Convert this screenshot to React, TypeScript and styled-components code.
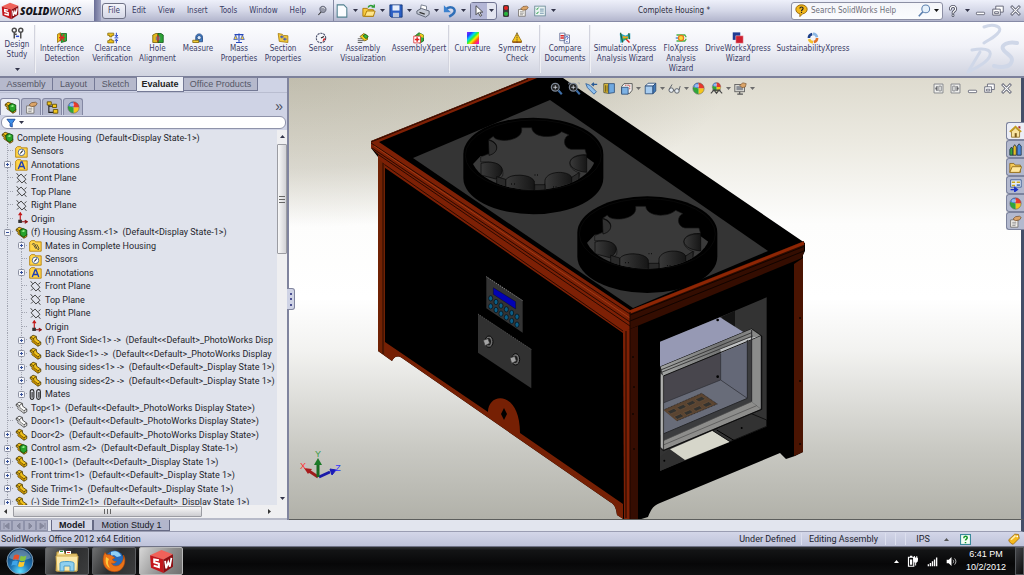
import React from "react";
import styled, { createGlobalStyle, css } from "styled-components";

const uiFont = '"DejaVu Sans Condensed", "DejaVu Sans", sans-serif';
const treeFont = 'Roboto, "Open Sans", sans-serif';
const tabFont = '"Liberation Sans", Arial, sans-serif';

const GlobalStyle = createGlobalStyle`
  * { box-sizing: border-box; }
  body { margin: 0; background: #0b0b0c; font-family: ${uiFont}; font-size: 8px; color: #3a3c66; }
  button { margin: 0; padding: 0; border: 0; background: none; color: inherit; font: inherit; cursor: default; }
  svg { display: block; flex: none; }
  ul { list-style: none; margin: 0; padding: 0; }
`;

/* ---------- icons ---------- */

const Part = ({ main = "#f2c21b", edge = "#4a3600", dark = "#b98500" }) => (
  <g stroke={edge} strokeWidth="1" strokeLinejoin="round">
    <path d="M1.5 4 5 1.5 9 3 9.5 6.500 14.500 10 14.500 13 11 15 3.500 9.500 4 7 1.500 6z" fill={main} />
    <path d="M1.500 4 5.500 5.500 9 3M5.500 5.500 6 8.500 11 12 14.500 10M11 12V15" fill="none" />
    <path d="M5.500 6 6 8.500 11 12V14.500L4 9.500z" fill={dark} stroke="none" />
  </g>
);

const Assy = () => (
  <g>
    <Part />
    <path d="M6 5.500 10 3 14.500 5V11L10.500 13.500 6.500 11z" fill="#27a32a" stroke="#0c4a0e" />
    <path d="M8 6.500 10.500 5 12.500 6 10.500 7.500z" fill="#9df08f" />
  </g>
);

const Folder = () => (
  <path d="M.8 4 3 2h4l1 1.500h7v11.500H.8z" fill="#ffd54a" stroke="#b07a00" />
);

const Ball = () => (
  <g>
    <path d="M8 8V1A7 7 0 0 0 1.500 6z" fill="#3f7fe0" />
    <path d="M8 8V1A7 7 0 0 1 15 8z" fill="#e8382c" />
    <path d="M8 8H15A7 7 0 0 1 8 15z" fill="#f5c61c" />
    <path d="M8 8 1.500 6A7 7 0 0 0 8 15z" fill="#2fa63a" />
    <ellipse cx="6" cy="4.500" rx="3" ry="2" fill="#fff" opacity=".45" />
    <circle cx="8" cy="8" r="7" fill="none" stroke="#555" strokeWidth=".6" />
  </g>
);

const Hand = () => (
  <g>
    <path d="M2 6h9v9H2z" fill="#f5f3ee" stroke="#6d6a66" />
    <path d="M4 9h5M4 11h5M4 13h4" stroke="#888" />
    <path d="M5 5 8 2 13 1.500 15 3 13 6 8 7z" fill="#dba468" stroke="#6b4520" strokeWidth=".8" />
  </g>
);

const Lens = ({ ring }: { ring: string }) => (
  <g fill="none">
    <circle cx="6.500" cy="6.500" r="4.800" stroke={ring} strokeWidth="1.600" fill="#222" />
    <path d="m10.500 10.500 4 4.500" stroke="#3f6fa8" strokeWidth="2.600" />
    <path d="M4 6.500h5M6.500 4v5" stroke="#d9dde5" />
  </g>
);

const icons: Record<string, React.ReactNode> = {
  part: <Part />,
  hidden: <Part main="#fdfdfd" edge="#333" dark="#c9c9c9" />,
  assy: <Assy />,
  sensorFolder: <g><Folder /><circle cx="8" cy="9" r="4" fill="#fff" stroke="#33518c" /><path d="m6.500 10.500 3-3.500" stroke="#222" strokeWidth="1.300" /></g>,
  noteFolder: <g><Folder /><path d="M4 13.500 7.500 5h1.200L12 13.500M5.500 10.500h5" stroke="#1f3fb4" strokeWidth="1.700" fill="none" /></g>,
  mateFolder: <g><Folder /><path d="M4 7c0-2 3-2 3.500 0l2.500 5c1 2 3 1 2-1L9.500 6.500M5.500 7l3 5" stroke="#333" fill="none" /></g>,
  plane: <path d="M2.500 7 7.500 2.500 13.500 9 8.500 13.500zM2 1.500 4.500 4.500M11.500 11.500 14 14.500M2.500 13 5 10.500M11.500 5.500 14 3" stroke="#333" fill="none" strokeWidth="1.100" />,
  origin: <g fill="none" strokeWidth="1.400"><path d="M6.500 13V1.500M4.500 4l2-3 2 3" stroke="#c11515" /><path d="M6.500 12h8M12 10l3 2-3 2" stroke="#8d1010" /><path d="M4 9.500h4.500v4H4z" fill="#333" stroke="none" /></g>,
  mates: <g fill="none" stroke="#222" strokeWidth="1.300"><rect x="1.500" y="2" width="4.500" height="12" rx="2.200" /><path d="M3.800 5v7M12.200 5v7" /><rect x="9.500" y="2" width="4.500" height="12" rx="2.200" /></g>,
  props: <Hand />,
  config: <g><path d="M3.500 3v11h6M3.500 6.500h5" stroke="#222" fill="none" strokeWidth="1.300" /><path d="M1.500 1h5v4h-5zM8 4h5v4H8zM9 10.500h5.500v4.500H9z" fill="#f5c91d" stroke="#5d4700" /></g>,
  ball: <Ball />,
  filter: <path d="M1.500 2h13L10 8.500V14.500L6.500 13V8.500z" fill="#3d8fe8" stroke="#123f94" strokeWidth="1.300" />,
  study: <g fill="none" stroke="#4b4b4b" strokeWidth="1.800"><circle cx="4" cy="4" r="2.500" /><circle cx="12" cy="4" r="2.500" /><path d="M4 6.500V14M12 6.500V14M4 9h3" /><path d="M6 11.500h4" stroke="#2b4bd0" /></g>,
  interference: <g><path d="M2 3 6 1v10l-4 3z" fill="#f0c420" stroke="#8a6a00" /><path d="M7 2h7v10l-7 2z" fill="#2fb83a" stroke="#0b5d14" /><path d="m5 3 6 9M11 3 5 12M4 7.500h8" stroke="#e02424" strokeWidth="1.600" /></g>,
  clearance: <g><path d="M1 1.500h8v3H6.500v2h-3v-2H1zM1 14.500h8v-3H6.500v-2h-3v2H1z" fill="#f2c41c" stroke="#7c6000" /><path d="M12.500 1v5M12.500 15v-5M10.500 4l2 2.500 2-2.500M10.500 12l2-2.500 2 2.500M10 7.800h5" stroke="#2546c8" fill="none" strokeWidth="1.300" /></g>,
  hole: <g><path d="M1 4 5 2h3v12H1z" fill="#e4b91d" stroke="#6e5600" /><path d="M8 2h4l3 2v10H8z" fill="#2aa336" stroke="#0b4f12" /><path d="M5 6h6v5H5z" fill="#7c7c84" /><path d="M8 4v9" stroke="#c22" strokeWidth="1.500" /></g>,
  measure: <g><path d="M5 12V7c0-6 9-6 9 0v6H5z" fill="#3f7fc9" stroke="#1b3f78" /><circle cx="9.500" cy="7.500" r="2.800" fill="#d8e8fb" stroke="#1b3f78" /><path d="M1 11h8v3H1z" fill="#f3cf3a" stroke="#7c6000" /></g>,
  mass: <g fill="none"><path d="M8 2v11M2 3.500h12M4 14h8" stroke="#2447bd" strokeWidth="1.500" /><path d="M3.500 4 1 10h5zM12.500 4 10 10h5z" fill="#f2cf42" stroke="#2447bd" strokeWidth=".9" /></g>,
  section: <g><path d="M1.500 2 7 3l1.500 1.500L14.500 5v9L3 12.500z" fill="#f3c93a" stroke="#a07400" /><path d="M4 6.500h5M6.500 4.500v4M8 9.500h5M10.500 7.500v4" stroke="#2546c8" strokeWidth="1.200" /></g>,
  sensor: <g><circle cx="8" cy="8" r="6.300" fill="#f4f6fb" stroke="#444b66" strokeWidth="1.400" strokeDasharray="3 1" /><path d="M8 8 12 6" stroke="#222" strokeWidth="1.500" /><path d="M10 13a6 6 0 0 0 4-5l-3 1z" fill="#e02424" /></g>,
  visual: <g><path d="M1 9h6M1 11.500h8M1 14h6" stroke="#555" strokeWidth="1.200" /><path d="M4 6 9 2l5 3v5l-4 2z" fill="#f0c820" stroke="#6e5600" /><path d="m8 5 3-2 4 3-3 3z" fill="#39b43d" stroke="#0b5d14" /></g>,
  axpert: <g><path d="M3 5 8 1l6 3v8l-5 3z" fill="#35ad3a" stroke="#0b5d14" /><path d="M9 1.500 14 4v4L9 6z" fill="#f0c820" /><path d="M1 5.500h9v9H1z" fill="#fff" stroke="#d22" /><path d="M5.500 7v6M2.500 10h6" stroke="#e02020" strokeWidth="2" /></g>,
  compare: <g><path d="M1 1.500h7v10H1zM7 4h7v11H7z" fill="#f7f9ff" stroke="#56618c" /><path d="M2 5h4.500M2 8h4.500" stroke="#d22" strokeWidth="1.700" /><path d="M9 7.500c0-2 3.500-2 3 .2-.2 1-1.500 1-1.500 2.500M10.500 12v1.500" stroke="#2447bd" strokeWidth="1.300" fill="none" /></g>,
  symmetry: <g><path d="M8 1.500c2 3 2.500 5 6 10.500v1.500H2V12C5.500 6.500 6 4.500 8 1.500z" fill="#f6c620" stroke="#8a6300" /><path d="M8 .5v15" stroke="#3b3b3b" strokeDasharray="2 1" /><path d="M2 13.500h12" stroke="#8a3c00" strokeWidth="1.500" /></g>,
  simulation: <g><path d="M1 2c4 0 5 3 8 2.500 2-.5 3-2.500 6-3v8c-3-1-6 0-9 3l-4 2z" fill="#2aa7c0" /><path d="m2 1 3 13M13 1.500l1 8" stroke="#263" strokeWidth="1.500" /><path d="M5 5c2 1 4 1.500 7 .5v3C9 9 7 9 5 8.500z" fill="#f0a51c" /><path d="M9 9l5 5" stroke="#d22" strokeWidth="1.800" /><path d="M6 9.500c2 0 3-.5 5-1" stroke="#3b3" strokeWidth="1.500" fill="none" /></g>,
  flo: <g fill="none" strokeWidth="1.700"><path d="M2 4h11l2 3M2 12h11l2-3" stroke="#49b045" /><path d="M1 8h4" stroke="#2c7cd6" /><circle cx="8" cy="8" r="3.500" stroke="#e8761c" fill="#f8dd3a" /></g>,
  drive: <g><path d="M1 .5h10v10H1z" fill="#1f3a93" /><path d="M5 5h10v10H5z" fill="#cf2030" stroke="#f6dfe2" strokeWidth=".6" /></g>,
  sustain: <g fill="none" strokeWidth="3.400"><path d="M8 2.500A5.500 5.500 0 0 1 13.300 7" stroke="#8cb7e4" /><path d="M13.500 8A5.500 5.500 0 0 1 9 13.400" stroke="#e2732a" /><path d="M8 13.500A5.500 5.500 0 0 1 2.700 9.500" stroke="#f3c02e" /><path d="M2.500 8A5.500 5.500 0 0 1 7 2.600" stroke="#1d3f88" /></g>,
  pin: <g><path d="M6 2.500c4-2 8 1 7 5s-5 4-7 2.500S3 4 6 2.500z" fill="#9699a8" stroke="#45485a" /><path d="m6 10-4 4.500" stroke="#333" strokeWidth="1.500" /><path d="M7 4c2-1 4 0 4 1.500" stroke="#fff" fill="none" /></g>,
  doc: <path d="M2.500 1h7.500l3.500 3.500V15h-11z" fill="#fbfdff" stroke="#51808f" strokeWidth="1.200" />,
  open: <g><path d="M1 5h5l1 1.500h6V14H1z" fill="#f6c93d" stroke="#a87500" /><path d="m3 14 2.500-6H15l-2 6z" fill="#ffe68a" stroke="#a87500" /><path d="M7 4c1-3 5-3 6-.5M11 3.500h3v-3" stroke="#2b9b34" strokeWidth="1.600" fill="none" /></g>,
  save: <g><path d="M1 1h14v14H2.500L1 13.500z" fill="#2b5fc4" stroke="#153877" /><path d="M4 1.500h8v6H4z" fill="#e8effb" /><path d="M4.500 10h7v5h-7z" fill="#b9c6dd" /></g>,
  print: <g><path d="m5 6 1-5 6 1.500v4" fill="#fff" stroke="#6b7384" /><path d="m1 8 5-3 9 3v4l-4 3-10-4z" fill="#c3c8d4" stroke="#555c6d" /><path d="m4 9.500 6 2" stroke="#333" strokeWidth="1.400" /></g>,
  undo: <g fill="none"><path d="M3 6.500C8 1 15 5 13 9.500c-1 2.500-3 3.500-6 5" stroke="#2f6fb8" strokeWidth="2.800" /><path d="M1 1.500v8h8z" fill="#3c82cf" /></g>,
  cursor: <path d="M4 1v12l3-3 2.500 5 2-1-2.500-4.500h4z" fill="#fff" stroke="#333" strokeWidth="1.100" />,
  traffic: <g><rect x="4" y="0" width="8" height="16" rx="2" fill="#3b3b3b" /><circle cx="8" cy="4" r="2.800" fill="#e32222" /><circle cx="8" cy="11.800" r="2.800" fill="#27b53a" /></g>,
  list: <g><rect x="1" y="1.500" width="14" height="13" fill="#e9f2f2" stroke="#5d7f8c" /><path d="m3 5 1 1 2-2.500M3 10.500l1 1 2-2.500" stroke="#1e9a3c" fill="none" strokeWidth="1.300" /><path d="M8 5.500h5M8 8h5M8 11h5" stroke="#6a8fa8" strokeWidth="1.200" /></g>,
  searchHelp: <g><path d="M8 1c4 0 7 2.500 7 5.500S12 12 9.500 12L6 15.500V12C3 11.500 1 9.500 1 6.500S4 1 8 1z" fill="#f2b81d" stroke="#8a5a00" /><path d="M6 5.500c0-2.500 4-2.500 4 0C10 7 8 7 8 8.500M8 9.500V11" stroke="#222" strokeWidth="1.400" fill="none" /></g>,
  search: <g fill="none"><circle cx="9.500" cy="6" r="4.800" fill="#e6f1fb" stroke="#5b7fae" strokeWidth="1.300" /><path d="m6 9.500-5 5.500" stroke="#5b7fae" strokeWidth="2" /></g>,
  help: <g fill="none" strokeLinecap="round"><path d="M4.500 5.500c0-5 7.500-4.500 7 0C11.300 8 8 8 8 10.500M8 13.600V14" stroke="#4c4f60" strokeWidth="3.800" /><path d="M4.500 5.500c0-5 7.500-4.500 7 0C11.300 8 8 8 8 10.500M8 13.600V14" stroke="#fff" strokeWidth="1.600" /></g>,
  min: <rect x="2" y="10.500" width="12" height="3.500" rx="1" fill="#fff" stroke="#5c5f70" strokeWidth="1.200" />,
  restore: <g fill="#fff" stroke="#5c5f70" strokeWidth="1.200"><path d="M5 1.500h10v8H5z" /><path d="M1 5.500h10v8H1z" /><path d="M3.500 9h5v2.500h-5z" /></g>,
  close: <g fill="none" strokeLinecap="square"><path d="m3 3 10 10M13 3 3 13" stroke="#5c5f70" strokeWidth="4" /><path d="m3 3 10 10M13 3 3 13" stroke="#fff" strokeWidth="1.700" /></g>,
  paneL: <g fill="#efefec" stroke="#777a80" strokeWidth="1.200"><path d="M1.500 1.500h13v13h-13z" /><path d="M6 4.500v7l-2.500-3.500z" fill="#555" /><path d="M8.500 4.500h3.500v7H8.500z" /></g>,
  paneR: <g fill="#efefec" stroke="#777a80" strokeWidth="1.200"><path d="M1.500 1.500h13v13h-13z" /><path d="M10 4.500v7l2.500-3.500z" fill="#555" /><path d="M4 4.500h3.500v7H4z" /></g>,
  zoomFit: <Lens ring="#7d8796" />,
  zoomArea: <g><Lens ring="#7d8796" /><path d="M1 3V1h3M12 1h2v2" stroke="#9aa3b0" fill="none" /></g>,
  prev: <g><path d="m1 2 5 2 8 8-3 3-8-8z" fill="#8fc0ee" stroke="#2a5b96" /><path d="M15 3H9M11 1 8.500 3 11 5" stroke="#2a5b96" strokeWidth="1.400" fill="none" /></g>,
  sectionView: <g><path d="M1 2h6v12l-6-1z" fill="#e7c33a" stroke="#4d4a30" /><path d="M7 2h7v11l-7 1z" fill="#6fa9e0" stroke="#2a4b76" /><path d="M3 4v8M5 4v8" stroke="#5b4a10" /></g>,
  orient: <g><path d="M2 5.500 5 2h10v8l-3 4H2z" fill="#f3f3f0" stroke="#444" /><path d="M2 6.500h8V15H2z" fill="#7db2e4" stroke="#2a4b76" /><path d="M6 4h6M12 4v6" stroke="#b33" strokeDasharray="2 1" /></g>,
  cube: <g stroke="#2a4b76"><path d="M1.500 5 5 1.500h9.500L11 5z" fill="#eaf3fc" /><path d="M1.500 5H11v9.500H1.500z" fill="#a8cdf0" /><path d="M11 5l3.500-3.500V11L11 14.500z" fill="#3f79b8" /></g>,
  glasses: <g fill="#e6ecf2" stroke="#5f646b" strokeWidth="1.200"><circle cx="4" cy="10" r="2.800" /><circle cx="11" cy="11" r="2.800" /><path d="M6.500 10l2 .5M1.500 9 5 3M13.500 10 15 5" fill="none" /></g>,
  scene: <g><g transform="translate(2 0) scale(.75)"><Ball /></g><path d="m1 14 4-4 3 4 3-4 4 4M3 10h10" stroke="#444" fill="none" strokeWidth="1.300" /></g>,
  viewSet: <g><rect x="1" y="3" width="12" height="9" fill="#d9d9d3" stroke="#555" /><path d="M3 5h8v5H3z" fill="#8b8f96" /><path d="M4 15h7M7 12v3" stroke="#555" strokeWidth="1.500" /><path d="M7 4l4-3 4 1-1 4-4 1z" fill="#dba468" stroke="#6b4520" strokeWidth=".7" /></g>,
  home: <g><path d="M3 8v7h10V8L8 3.500z" fill="#f7e3a0" stroke="#8a6a20" /><path d="M1 8.500 8 2l7 6.500" stroke="#c39a1c" strokeWidth="2" fill="none" /><path d="M11.500 1.500h2.500V5l-2.500-1.500z" fill="#a52a2a" /><path d="M7 10h2.500v5H7z" fill="#7a5a1a" /></g>,
  library: <g stroke="#234"><path d="M1 8 3 5l2 3v7H1z" fill="#34a53a" /><path d="M5 5 7 2l2 3v10H5z" fill="#e8bd24" /><path d="M10 4 12.500 1 15 4v11h-5z" fill="#4b86d8" /></g>,
  folderOpen: <g><path d="M1 3h5l1.500 2H14v9H1z" fill="#f3c95a" stroke="#8a6414" /><path d="m1 14 3-7h11.500L13 14z" fill="#ffe79b" stroke="#8a6414" /></g>,
  palette: <g><path d="M2 1h13v9H2z" fill="#e5ecf6" stroke="#33518c" /><path d="M3.500 3h4v2h-4zM9.500 3h4v2h-4zM3.500 7h4v2h-4z" fill="#c9a71d" /><path d="M9.500 6.500h4v2h-4z" fill="#4b6fae" /><path d="M2 13h7M7 10.500 10.500 13 7 15.500z" stroke="#1a30c8" fill="#1a30c8" strokeWidth="1.500" /></g>,
  helpBox: <g><rect x=".8" y=".8" width="14.400" height="14.400" fill="#f4fff4" stroke="#3a8a9a" strokeWidth="1.600" /><path d="M5.500 6c0-3.500 5-3.500 5-.5C10.500 7.500 8 7.500 8 9.500M8 11.500v2" stroke="#15962a" strokeWidth="2.200" fill="none" /></g>,
  tag: <g><path d="M1 9 9 1.500 14 2l1 5-8 8c-2 0-6-3-6-6z" fill="#f5b91d" stroke="#9a6300" /><path d="m4 9 6-5.500" stroke="#fff0b0" strokeWidth="2" /><circle cx="12.300" cy="4.500" r="1.200" fill="#fff" /></g>,
  plug: <g><path d="M2 3h7v12H2z" fill="none" stroke="#fff" strokeWidth="1.600" /><path d="M4 1h3v2H4zM4 6h3v7H4z" fill="#fff" /><path d="M9 4v3c0 4 5 4 5 0V4zM11.500 10v4M10 1.500V4M13 1.500V4" fill="#fff" stroke="#fff" strokeWidth="1.300" /></g>,
  signal: <path d="M1 12h2v3H1zM4 10h2v5H4zM7 7.500h2V15H7zM10 5h2v10h-2zM13 2h2v13h-2z" fill="#fff" />,
  speaker: <g><path d="M1 5.500h3L8 1.500v13L4 10.500H1z" fill="#fff" /><path d="M10 5.500c1.500 1.500 1.500 3.500 0 5M12.500 3.500c2.500 3 2.500 6 0 9" stroke="#d8d8d8" strokeWidth="1.200" fill="none" /></g>,
  curvature: (
    <g>
      <defs>
        <linearGradient id="curv" x1="0" y1="0" x2="1" y2="1">
          <stop offset="0" stopColor="#9a1cff" /><stop offset=".2" stopColor="#2340ff" /><stop offset=".36" stopColor="#00d8f0" />
          <stop offset=".48" stopColor="#28f03c" /><stop offset=".6" stopColor="#f8f000" /><stop offset=".74" stopColor="#ff5a10" />
          <stop offset=".88" stopColor="#ff1494" /><stop offset="1" stopColor="#c018ff" />
        </linearGradient>
      </defs>
      <rect width="16" height="16" fill="url(#curv)" />
    </g>
  ),
};

const Icon = ({ name, size = 12 }: { name: string; size?: number }) => (
  <svg width={size} height={size} viewBox="0 0 16 16" aria-hidden="true">{icons[name]}</svg>
);

const Caret = ({ up = false, color = "#33354a" }) => (
  <svg width="5" height="3" viewBox="0 0 5 3" aria-hidden="true">
    <path d={up ? "M0 3h5L2.500 0z" : "M0 0h5L2.500 3z"} fill={color} />
  </svg>
);

/* ---------- title bar ---------- */

const Shell = styled.div`
  display: flex;
  flex-direction: column;
  height: 100vh;
  overflow: hidden;
`;

const TitleBar = styled.header`
  display: flex;
  align-items: stretch;
  flex: none;
  height: 22px;
  background: linear-gradient(#eef0fa, #d5d8e8 50%, #b3b6cd);
  border-bottom: 1px solid #868aa6;
`;

const Brand = styled.div`
  display: flex;
  align-items: center;
  gap: 1px;
  width: 94px;
  padding-left: 1px;
  background: linear-gradient(#fcfcff, #d4d7e6);
  font: italic 10px "Noto Sans", sans-serif;
  color: #15151c;
  b { font-weight: 900; }
`;

const BrandEdge = styled.div`
  width: 7px;
  margin-right: 1px;
  background: linear-gradient(90deg, #6a6e96, #9ea1c0);
`;

const MenuBar = styled.nav`
  display: flex;
  align-items: center;
`;

const MenuItem = styled.button<{ $on?: boolean }>`
  height: 16px;
  padding: 0 5px;
  border: 1px solid ${(p) => (p.$on ? "#6f7286" : "transparent")};
  border-radius: 3px;
  background: ${(p) => (p.$on ? "linear-gradient(#f3f4fa, #d5d7e6)" : "none")};
`;

const ToolGroup = styled.div`
  display: flex;
  align-items: center;
`;

const Tool = styled.button<{ $w: number }>`
  display: flex;
  align-items: center;
  justify-content: center;
  width: ${(p) => p.$w}px;
  height: 18px;
`;

const Rule = styled.div`
  width: 1px;
  margin: 0 1px;
  background: #8589a3;
`;

const PressedPair = styled.div`
  display: flex;
  height: 18px;
  border: 1px solid #6f7391;
  border-radius: 3px;
  background: #e3e5f0;
  ${Tool} { height: 16px; }
  ${Tool}:first-child { background: #b3b6d6; }
`;

const DocTitle = styled.div`
  flex: 1;
  align-self: center;
  text-align: center;
  color: #2b2c3c;
`;

const SearchBox = styled.label`
  display: flex;
  align-items: center;
  align-self: center;
  gap: 3px;
  width: 152px;
  height: 18px;
  padding: 0 3px;
  border: 1px solid #8c8fa4;
  border-radius: 3px;
  background: linear-gradient(#f4f5f9, #fbfcfe);
  input {
    flex: 1;
    min-width: 0;
    padding: 0;
    border: 0;
    background: none;
    font: 8px ${uiFont};
    outline: 0;
  }
  input::placeholder { color: #6c6e78; opacity: 1; }
`;

/* ---------- ribbon ---------- */

const Ribbon = styled.div`
  position: relative;
  display: flex;
  flex: none;
  height: 56px;
  background: linear-gradient(#fdfdff, #f1f2f8 45%, #d0d3e0);
  border-bottom: 2px solid #7d819b;
`;

const Command = styled.button<{ $w: number; $tight?: boolean }>`
  display: flex;
  flex-direction: column;
  align-items: center;
  width: ${(p) => p.$w}px;
  padding-top: ${(p) => (p.$tight ? 5 : 10)}px;
  line-height: 10px;
  text-align: center;
  white-space: pre;
  svg + svg { margin-top: 8px; }
`;

const Divider = styled.div`
  width: 2px;
  margin: 3px 0;
  background: linear-gradient(90deg, #c3c5d3, #fff);
`;

const Watermark = styled.svg`
  position: absolute;
  right: 4px;
  top: 1px;
`;

/* ---------- feature panel ---------- */

const Main = styled.main`
  display: flex;
  flex: 1;
  min-height: 0;
`;

const Side = styled.aside`
  position: relative;
  display: flex;
  flex-direction: column;
  flex: none;
  width: 289px;
  border-right: 2px solid #80849e;
  background: #cfd3e5;
`;

const TabStrip = styled.div`
  display: flex;
  align-items: flex-start;
  height: 15px;
  border-bottom: 1px solid #b9bdd0;
  font: 9px ${tabFont};
`;

const CommandTab = styled.button<{ $w: number; $on?: boolean }>`
  width: ${(p) => p.$w}px;
  height: 13px;
  line-height: 12px;
  border: 1px solid #747995;
  border-width: 0 1px 1px 0;
  background: #b6b9cc;
  color: #555766;
  ${(p) => p.$on && css`
    height: 15px;
    margin-top: -1px;
    background: #eef0f6;
    color: #222;
    font-weight: bold;
  `}
`;

const PaneTabs = styled.div`
  display: flex;
  align-items: flex-end;
  height: 22px;
  padding-right: 4px;
`;

const PaneTab = styled.button<{ $on?: boolean }>`
  display: flex;
  align-items: center;
  justify-content: center;
  width: 20px;
  height: 17px;
  margin-right: 1px;
  border: 1px solid #8488a3;
  border-bottom: 0;
  border-radius: 3px 3px 0 0;
  background: ${(p) => (p.$on ? "#eceef5" : "#b4b8cd")};
`;

const More = styled.button`
  margin-left: auto;
  padding-bottom: 3px;
  font: 14px ${tabFont};
  line-height: 12px;
  color: #4a4d60;
`;

const FilterBox = styled.div`
  display: flex;
  align-items: center;
  gap: 3px;
  height: 13px;
  margin: 1px 1px 0;
  padding-left: 4px;
  border: 1px solid #8f93aa;
  border-radius: 6px;
  background: #fff;
`;

const TreeFrame = styled.div`
  display: grid;
  grid-template: minmax(0, 1fr) 13px / minmax(0, 1fr) 10px;
  flex: 1;
  min-height: 0;
  margin-top: 1px;
  background: #e0e3ec;
  border-bottom: 2px solid #b7bac8;
`;

const Tree = styled.ul`
  overflow: hidden;
  padding-top: 1px;
  font: 9px ${treeFont};
  color: #25262d;
`;

const TreeRow = styled.li`
  display: flex;
  align-items: center;
  height: 13px;
  white-space: pre;
  &:nth-child(even) { height: 14px; }
`;

const Guide = styled.span<{ $branch?: boolean }>`
  display: flex;
  align-items: center;
  flex: none;
  width: 14px;
  height: 100%;
  padding-left: 4px;
  background:
    ${(p) => (p.$branch ? "repeating-linear-gradient(90deg, #a3a6b2 0 1px, transparent 1px 2px) 8px 6px / 6px 1px no-repeat," : "")}
    repeating-linear-gradient(#a3a6b2 0 1px, transparent 1px 2px) 7px 0 / 1px 100% no-repeat;
`;

const Glyph = styled.span`
  flex: none;
  margin: 0 3px 0 1px;
`;

const ScrollV = styled.div`
  display: flex;
  flex-direction: column;
  align-items: center;
  justify-content: space-between;
  padding: 5px 0;
  background: #efeff1;
`;

const ThumbV = styled.div`
  display: flex;
  align-items: center;
  justify-content: center;
  width: 10px;
  height: 110px;
  margin: 6px 0 auto;
  border: 1px solid #9b9ca2;
  border-radius: 1px;
  background: linear-gradient(90deg, #f8f8f8, #d2d2d6);
`;

const ScrollH = styled.div`
  display: flex;
  align-items: center;
  grid-column: 1 / 3;
  padding: 0 16px 0 4px;
  background: #efeff1;
`;

const ThumbH = styled.div`
  display: flex;
  align-items: center;
  justify-content: center;
  width: 189px;
  height: 11px;
  margin: 0 auto 0 6px;
  border: 1px solid #9b9ca2;
  border-radius: 1px;
  background: linear-gradient(#f8f8f8, #cdcdd1);
`;

const Splitter = styled.button`
  position: absolute;
  z-index: 2;
  left: 287px;
  top: 210px;
  display: flex;
  flex-direction: column;
  align-items: center;
  justify-content: space-evenly;
  width: 8px;
  height: 22px;
  border: 1px solid #80849e;
  border-left: 0;
  border-radius: 0 3px 3px 0;
  background: #cfd3e5;
  i { width: 2px; height: 2px; background: #4d5192; }
`;

/* ---------- viewport ---------- */

const Viewport = styled.section`
  position: relative;
  flex: 1;
  min-width: 0;
  border-right: 3px solid #434e68;
  border-bottom: 1px solid #5c5e5c;
  background:
    radial-gradient(60% 34% at 0 0, rgba(110, 104, 80, 0.26), rgba(110, 104, 80, 0.18) 60%, transparent) no-repeat,
    linear-gradient(#dedbcf, #ebe9e0 14%, #fdfdfc 33%, #fff 50%, #f2f2f0 62%, #c9c9c3 84%, #b1b1a9);
`;

const Scene = styled.svg`
  position: absolute;
  inset: 0;
  width: 100%;
  height: 100%;
`;

const Hud = styled.div`
  position: absolute;
  top: 3px;
  left: 259px;
  right: 6px;
  display: flex;
  align-items: center;
  height: 14px;
`;

const HudEnd = styled.div`
  display: flex;
  margin-left: auto;
`;

const TaskPane = styled.div`
  position: absolute;
  right: -3px;
  top: 44px;
  display: flex;
  flex-direction: column;
  width: 18px;
`;

const TaskTab = styled.button<{ $on?: boolean }>`
  display: flex;
  align-items: center;
  justify-content: center;
  height: 18px;
  border: 1px solid #7c839d;
  border-right: 0;
  border-radius: 3px 0 0 3px;
  background: ${(p) => (p.$on ? "#eceef6" : "#b3b9ce")};
`;

/* ---------- bottom bars ---------- */

const MotionBar = styled.div`
  display: flex;
  flex: none;
  height: 12px;
  background: #e2e5ee;
  border-right: 3px solid #434e68;
  border-bottom: 1px solid #9a9db2;
  font: 9px ${tabFont};
`;

const NavButton = styled.button`
  display: flex;
  align-items: center;
  justify-content: center;
  width: 12px;
  border: 1px solid #8f93aa;
  background: #abaec2;
`;

const SheetTab = styled.button<{ $w: number; $on?: boolean }>`
  width: ${(p) => p.$w}px;
  margin-left: ${(p) => (p.$on ? 3 : 0)}px;
  line-height: 10px;
  border: 1px solid #666a84;
  border-top: 0;
  background: ${(p) => (p.$on ? "#d4d7e6" : "#b3b6cc")};
  font-weight: ${(p) => (p.$on ? "bold" : "normal")};
  color: #15161d;
`;

const StatusBar = styled.footer`
  display: flex;
  align-items: center;
  flex: none;
  height: 15px;
  padding: 0 4px 0 1px;
  background: linear-gradient(#d3d6e8, #bfc3da);
  border-bottom: 1px solid #6f7286;
  font: 9px ${treeFont};
  color: #22232e;
`;

const StatusGroup = styled.div`
  display: flex;
  align-items: center;
  margin-left: auto;
`;

const StatusCell = styled.span<{ $w: number; $ruled?: boolean }>`
  display: flex;
  justify-content: center;
  align-items: center;
  width: ${(p) => p.$w}px;
  height: 12px;
  border-right: ${(p) => (p.$ruled ? "1px solid #dcdfee" : "0")};
`;

const Taskbar = styled.div`
  display: flex;
  align-items: center;
  flex: none;
  height: 28px;
  padding-left: 6px;
  background: linear-gradient(#2e3033, #131415 12%, #070708 60%, #0f1011);
  color: #fff;
`;

const AppGroup = styled.div`
  display: flex;
  margin-left: 11px;
`;

const AppButton = styled.button<{ $on?: boolean }>`
  display: flex;
  align-items: center;
  justify-content: center;
  width: 44px;
  height: 28px;
  margin-right: 3px;
  border: 1px solid ${(p) => (p.$on ? "#b9b9b9" : "#5d5f62")};
  border-radius: 2px;
  background: ${(p) => (p.$on
    ? "linear-gradient(120deg, #d6d6d6, #8d8d8d 60%, #707070)"
    : "linear-gradient(120deg, #6e6f70, #2c2d2e 50%, #3c3d3e)")};
`;

const Tray = styled.div`
  display: flex;
  align-items: center;
  gap: 8px;
  margin-left: auto;
`;

const Clock = styled.time`
  width: 42px;
  font: 9px ${tabFont};
  line-height: 13px;
  text-align: center;
`;

const ShowDesktop = styled.button`
  width: 9px;
  height: 28px;
  border: 1px solid #55585c;
  background: linear-gradient(120deg, #44464a, #0c0c0d);
`;

/* ---------- drawings ---------- */

const CubeLogo = ({ size }: { size: number }) => (
  <svg width={size} height={size} viewBox="0 0 24 24" aria-hidden="true">
    <path d="M1 6 12 1l11 4-9 5z" fill="#f0625a" />
    <path d="M1 6l13 4v13L2 18z" fill="#c4161c" />
    <path d="M14 10l9-5v12l-9 6z" fill="#8e0d12" />
    <path d="M9.500 10.800 5 10v2.700l4.500 1.500v3.200L4.500 16" fill="none" stroke="#fff" strokeWidth="1.900" />
    <path d="m15.500 11.500 1 7 2-6 1.500 4.500 1.500-8.500" fill="none" stroke="#fff" strokeWidth="1.700" />
  </svg>
);

const Orb = () => (
  <svg width="28" height="28" viewBox="0 0 28 28" aria-hidden="true">
    <defs>
      <radialGradient id="orb" cx=".5" cy=".9" r=".9">
        <stop offset="0" stopColor="#5fe0ff" /><stop offset=".4" stopColor="#1f77b8" /><stop offset="1" stopColor="#123a63" />
      </radialGradient>
    </defs>
    <circle cx="14" cy="14" r="13" fill="url(#orb)" stroke="#7d9cb5" />
    <path d="M3 11a11.500 11.500 0 0 1 22 0c-7 3-15 3-22 0z" fill="#fff" opacity=".28" />
    <path d="M8 8.500c2-1.500 4-1 5.500-.2L12.300 13c-2-1-4-1-5.500.2z" fill="#e8502a" />
    <path d="M14.700 8.800c2 1 4 .8 5.800-.3l-1.300 5c-2 1-4 1-5.700 0z" fill="#86c440" />
    <path d="M6.500 14.300c2-1.200 4-1 5.500-.2l-1.200 4.700c-2-1-4-1-5.500.2z" fill="#3fa4e8" />
    <path d="M13.200 14.600c2 1 4 .8 5.700-.3l-1.300 5c-2 1-4 1-5.600 0z" fill="#fcc72e" />
  </svg>
);

const ExplorerIcon = () => (
  <svg width="26" height="24" viewBox="0 0 26 24" aria-hidden="true">
    <path d="M3 3h7l1 2h12v17H2z" fill="#f0d687" stroke="#c09a3c" />
    <path d="M5 1.500h5v3H5zM12 2h5v3h-5z" fill="#fff" />
    <path d="M6 2h3v1H6z" fill="#2a9d3c" /><path d="M13 3h3v1h-3z" fill="#d33" />
    <path d="M2 7h22l-1 15H3z" fill="#fbe9ab" stroke="#cda84c" />
    <path d="M6 22v-8c0-2 14-2 14 0v8h-4v-5h-6v5z" fill="#8fd0ef" stroke="#4e9cc6" />
  </svg>
);

const FoxIcon = () => (
  <svg width="24" height="24" viewBox="0 0 24 24" aria-hidden="true">
    <circle cx="12.500" cy="10.500" r="9" fill="#2569b8" />
    <path d="M9 3c4-2 9 0 10 4l-4 1-3-2-3 1z" fill="#8fd0f5" />
    <path d="M3 3.500C1 7 .5 12 2 16c3 7 12 8.500 17 4.500 4-3.500 5-10 2.500-14.500.5 4-1 7-3 9-3 3-8 2.500-9-1 2 1 4 0 5-1.500-3 0-4-1-4-2.500L13 9C11 7 8 6 7 5.500 6 6 4 6 3 3.500z" fill="#ea7318" stroke="#b84a08" strokeWidth=".6" />
    <path d="M4 8c-1 5 0 9 4 11-2-3-3-6-1-9z" fill="#ffc63a" />
  </svg>
);

/* The fan bowls share one shape; its coordinates are three times the scene's. */
const Fan = ({ x = 0, y = 0 }) => (
  <g transform={`translate(${x} ${y})`}>
    <path d="M280 222a210 109 0 0 1 420 0v72a210 109 0 0 1-420 0z" fill="#000" />
    <ellipse cx="490" cy="226" rx="204" ry="106" fill="none" stroke="#0c0c0c" strokeWidth="2" />
    <clipPath id={`bowl${x}`}><ellipse cx="490" cy="226" rx="187" ry="104" /></clipPath>
    <g clipPath={`url(#bowl${x})`}>
      <path d="M300 262 332 228 640 225 690 262 640 340 340 340z" fill="#3a3a3a" />
      <path
        d="M455 143h30c4 32 66 34 90 12l22 10c-18 6-20 38 6 43h42l5 17c-60-6-66 42-20 54l-4 14-22 8c-10-30-78-30-78 8l-4 9h-28c-8-40-84-40-86-10l-28-6 18-14c10-50-65-42-66-42v-15l24-10c30-4 34-34 0-42l14-10c8 20 80 16 85-16z"
        fill="#393939" stroke="#151515" strokeWidth="2"
      />
      <path d="M333 250c28-8 64-2 64 22-2 12-10 20-20 25l-44-12z" fill="url(#cup)" stroke="#080808" strokeWidth="2" />
      <path d="M407 300c8-20 78-20 86 4v40h-86z" fill="url(#cup)" stroke="#080808" strokeWidth="2" />
      <path d="M525 300c8-30 72-28 80-8v45h-80z" fill="url(#cup)" stroke="#080808" strokeWidth="2" />
      <path d="M650 225c-28 0-50 8-50 24 2 18 28 26 50 28z" fill="url(#cup)" stroke="#080808" strokeWidth="2" />
      <path d="M380 290 407 298V330L380 310zM605 292l22-14v25l-22 20zM494 314h31v20h-31z" fill="#2a2a2a" stroke="#080808" strokeWidth="2" />
      <path d="M355 180c32 8 34 38 2 46z" fill="#303030" stroke="#080808" strokeWidth="2" />
    </g>
    <path d="M494 285h2m6 0h2M424 312h2m6 0h2M549 321h2m6 0h2" stroke="#000" strokeWidth="4" />
  </g>
);

const keyColumns = [362, 378, 393, 409, 425, 441];

const Housing = () => (
  <Scene viewBox="289 78 732 441" preserveAspectRatio="xMidYMid meet" role="img" aria-label="Complete Housing model">
    <defs>
      <linearGradient id="cup"><stop offset="0" stopColor="#3a3a3a" /><stop offset="1" stopColor="#161616" /></linearGradient>
      <linearGradient id="glass" x2="1" y2="0"><stop offset="0" stopColor="#b4b6b4" /><stop offset=".6" stopColor="#7c7d7c" /><stop offset="1" stopColor="#9b9c9a" /></linearGradient>
    </defs>

    <path d="M371 141 528 78H563L805 243V251L803 255V452L795 456 786 459 780 453 660 503C654 505 651 509 648 517L638 520H625L617 515C616 507 614 504 610 502L402 358C397 355 394 357 392 361L378 351V157L371 148z" fill="#000" />

    {/* rim and lid */}
    <path d="M371 141 528 78H537L379 142 630 310V329L623 333 378 163V154L371 148z" fill="#7d2005" />
    <path d="M371 142 528 79M372 148 630 322M376 153 630 326M371 143 630 314M378 160 623 331" fill="none" stroke="#2a0a00" />
    <path d="M374 146 630 318" stroke="#a03a14" />
    <path d="M630 310 804 241V252L802 258 630 329z" fill="#340d01" />
    <path d="M630 312 804 243" stroke="#8e2604" strokeWidth="3" />
    <path d="M630 321 804 251M630 315 805 246" stroke="#120400" />
    <path d="M630 312V329" stroke="#1a0600" />
    <path d="M550 100 413 158 633 308 768 251z" fill="#343434" />
    <g transform="translate(370 80) scale(.33333)">
      <Fan />
      <Fan x={342} y={236} />
    </g>

    {/* posts and base trim */}
    <path d="M378 158 385 165V356L378 351z" fill="#702204" />
    <path d="M383 163V354" stroke="#2a0a00" />
    <path d="M623 331 630 329V520H624z" fill="#7d2005" />
    <path d="M630 329 638 326V519L630 520z" fill="#350d02" />
    <path d="M630 329V520M626 331V518" stroke="#1d0600" />
    <path d="M794 264 803 258V452L794 456z" fill="#4a1402" />
    <path d="M385 342 488 412C488 392 520 390 520 433L623 504V519L617 515C616 507 614 504 610 502L402 358C397 355 394 357 392 361L385 356z" fill="#762004" />
    <path d="m504 408 3 6-3 6-3-6z" fill="#000" />
    <g fill="#120400">
      <circle cx="633" cy="357" r="1" /><circle cx="634" cy="387" r="1" /><circle cx="633" cy="414" r="1" /><circle cx="634" cy="449" r="1" />
      <circle cx="800" cy="318" r="1" /><circle cx="800" cy="381" r="1" /><circle cx="800" cy="444" r="1" />
    </g>

    {/* control panels */}
    <g transform="translate(370 250) scale(.33333)">
      <path d="m349 80 109 72v96l-109-73z" fill="#343434" />
      <path d="m349 80 109 72" stroke="#8a8a8a" strokeWidth="3" strokeDasharray="4 3" />
      <path d="m370 113 67 42v22l-67-44z" fill="#0202b4" stroke="#000" />
      {keyColumns.map((x, i) => (
        <g key={x} fill="#0b5d86" stroke="#020c14" strokeWidth="2">
          <ellipse cx={x} cy={145 + i * 11} rx="6" ry="8" />
          <ellipse cx={x} cy={169 + i * 11} rx="6" ry="8" />
        </g>
      ))}
      <path d="m324 192 160 106v117L324 308z" fill="#313131" />
      <path d="m324 192 160 106" stroke="#6a6a6a" strokeWidth="2" strokeDasharray="4 3" />
      {[[354, 275], [434, 328]].map(([x, y]) => (
        <g key={x}>
          <ellipse cx={x + 3} cy={y} rx="12" ry="17" fill="#6d6d6d" stroke="#080808" strokeWidth="3" />
          <ellipse cx={x + 1} cy={y} rx="8" ry="11" fill="#1a1a1a" />
          <path d={`M${x - 14} ${y - 4}l14-5 5 14-14 7z`} fill="#a4a4a4" stroke="#333" strokeWidth="2" />
        </g>
      ))}
    </g>

    {/* door opening with glazed box */}
    <g transform="translate(610 230) scale(.33333)" strokeLinejoin="round">
      <path d="M150 337 470 202V590L150 723z" fill="#333" />
      <path d="m335 260 40-18v45l-15 20z" fill="#141414" />
      <path d="M150 335 330 262 400 306 150 410z" fill="#9699b4" />
      <path d="M150 680 180 658 225 690 150 723z" fill="#303030" />
      <path d="M180 658 308 602 360 635 225 690z" fill="#d6d6ca" />
      <path d="m308 602 52 33 110-46V570L410 545z" fill="#323232" stroke="#000" strokeWidth="2" />
      <path d="m320 600 55 33" stroke="#000" strokeWidth="3" />
      <path d="M152 410 425 297 455 318V538L160 662 152 655z" fill="#3b3c3e" stroke="#000" strokeWidth="2" />
      <path d="M152 440 330 370V450L152 522z" fill="#48464d" />
      <path d="M332 362 412 328V505L332 450z" fill="#646877" />
      <path d="M152 522 332 450 412 505 152 615z" fill="#686c79" />
      <path d="M332 372V450L152 522M332 450 412 505" fill="none" stroke="#2f3038" strokeWidth="2" />
      <path d="M160 540 275 490 322 522 200 573z" fill="#5a4431" />
      <path d="m160 540 115-50 47 32-122 51" fill="none" stroke="#1f1c1c" strokeWidth="2" strokeDasharray="3 2" />
      <g fill="#33322f" stroke="#6b5038" strokeWidth="2">
        <path d="m172 544 20-9 10 8-20 9zM200 532l20-9 10 8-20 9zM228 520l20-9 10 8-20 9zM255 508l20-9 12 8-20 9zM192 560l20-9 10 8-20 9zM220 548l20-9 10 8-20 9zM248 536l20-9 10 8-20 9zM276 524l20-9 12 8-20 9z" />
      </g>
      <path d="M152 410 425 297 452 316 160 438z" fill="url(#glass)" opacity=".85" />
      <path d="m330 357 84-32 38-7-40 18-78 32z" fill="#d5d8da" opacity=".75" />
      <path d="M152 420 425 308M152 428 428 318" stroke="#3a3a3a" strokeWidth="3" />
      <path d="M160 438 452 318" stroke="#111" strokeWidth="3" />
      <path d="M425 330 452 318V536L425 515z" fill="#8b8c8b" />
      <path d="M412 330V505L152 615M425 300V515" fill="none" stroke="#26272a" strokeWidth="3" />
      <path d="m425 515 27 22L160 660V632z" fill="#8d8d8b" />
      <path d="M160 632 425 515M160 645 440 527" stroke="#4a4a4a" strokeWidth="2" />
      <path d="M152 430 161 438V660L152 652z" fill="#b9bab8" stroke="#222" strokeWidth="1" />
      <path d="M160 438V661L455 538V318L425 297" fill="none" stroke="#0b0b0b" strokeWidth="2" />
      <g fill="#000">
        <circle cx="323" cy="270" r="4" /><circle cx="323" cy="440" r="4" /><circle cx="395" cy="594" r="3" /><circle cx="163" cy="692" r="3" />
      </g>
    </g>

    {/* axis triad */}
    <g strokeWidth="3">
      <path d="M318 477 309 471" stroke="#9e1b1b" /><path d="m304 468 8 1-4 5z" fill="#a81c1c" />
      <path d="m319 477 11-5" stroke="#1b1ba8" /><path d="m336 470-6-1 2 6z" fill="#1b1bb8" stroke="#1b1bb8" strokeWidth="1" />
      <path d="M318 477V464" stroke="#196b22" /><path d="m318 458-4 7h8z" fill="#1c7a28" />
    </g>
    <g fontFamily="Liberation Sans, sans-serif" fontSize="9" textAnchor="middle">
      <text x="303" y="469" fill="#f33">X</text>
      <text x="318" y="457" fill="#3a9a48">Y</text>
      <text x="338" y="471" fill="#33f">Z</text>
    </g>
  </Scene>
);

/* ---------- data ---------- */

type Cmd = [icon: string, label: string, width: number];

const ribbonGroups: Cmd[][] = [
  [
    ["interference", "Interference\nDetection", 52],
    ["clearance", "Clearance\nVerification", 49],
    ["hole", "Hole\nAlignment", 41],
    ["measure", "Measure", 40],
    ["mass", "Mass\nProperties", 42],
    ["section", "Section\nProperties", 46],
    ["sensor", "Sensor", 30],
    ["visual", "Assembly\nVisualization", 54],
    ["axpert", "AssemblyXpert", 58],
  ],
  [["curvature", "Curvature", 45], ["symmetry", "Symmetry\nCheck", 44]],
  [["compare", "Compare\nDocuments", 48]],
  [
    ["simulation", "SimulationXpress\nAnalysis Wizard", 68],
    ["flo", "FloXpress\nAnalysis\nWizard", 44],
    ["drive", "DriveWorksXpress\nWizard", 70],
    ["sustain", "SustainabilityXpress", 80],
  ],
];

type Row = [level: number, sign: "" | "+" | "-", icon: string, label: string];

const rows: Row[] = [
  [0, "", "assy", "Complete Housing  (Default<Display State-1>)"],
  [1, "", "sensorFolder", "Sensors"],
  [1, "+", "noteFolder", "Annotations"],
  [1, "", "plane", "Front Plane"],
  [1, "", "plane", "Top Plane"],
  [1, "", "plane", "Right Plane"],
  [1, "", "origin", "Origin"],
  [1, "-", "assy", "(f) Housing Assm.<1>  (Default<Display State-1>)"],
  [2, "+", "mateFolder", "Mates in Complete Housing"],
  [2, "", "sensorFolder", "Sensors"],
  [2, "+", "noteFolder", "Annotations"],
  [2, "", "plane", "Front Plane"],
  [2, "", "plane", "Top Plane"],
  [2, "", "plane", "Right Plane"],
  [2, "", "origin", "Origin"],
  [2, "+", "part", "(f) Front Side<1> ->  (Default<<Default>_PhotoWorks Disp"],
  [2, "+", "part", "Back Side<1> ->  (Default<<Default>_PhotoWorks Display"],
  [2, "+", "part", "housing sides<1> ->  (Default<<Default>_Display State 1>)"],
  [2, "+", "part", "housing sides<2> ->  (Default<<Default>_Display State 1>)"],
  [2, "+", "mates", "Mates"],
  [1, "", "hidden", "Top<1>  (Default<<Default>_PhotoWorks Display State>)"],
  [1, "", "hidden", "Door<1>  (Default<<Default>_PhotoWorks Display State>)"],
  [1, "+", "part", "Door<2>  (Default<<Default>_PhotoWorks Display State>)"],
  [1, "+", "assy", "Control asm.<2>  (Default<Default_Display State-1>)"],
  [1, "+", "part", "E-100<1>  (Default<<Default>_Display State 1>)"],
  [1, "+", "part", "Front trim<1>  (Default<<Default>_Display State 1>)"],
  [1, "+", "part", "Side Trim<1>  (Default<<Default>_Display State 1>)"],
  [1, "+", "part", "(-) Side Trim2<1>  (Default<<Default>_Display State 1>)"],
];

const Expander = ({ sign }: { sign: "+" | "-" }) => (
  <svg width="7" height="7" viewBox="0 0 7 7" aria-hidden="true">
    <rect x=".5" y=".5" width="6" height="6" rx="1" fill="#f4f5fa" stroke="#8b8fa0" />
    <path d={sign === "+" ? "M2 3.500h3M3.500 2v3" : "M2 3.500h3"} stroke="#34509a" />
  </svg>
);

const fileTools = [
  ["doc", "New"], ["open", "Open"], ["save", "Save"], ["print", "Print"], ["undo", "Undo"],
];

const hudTools: [string, boolean, number][] = [
  ["zoomFit", false, 17], ["zoomArea", false, 18], ["prev", false, 17], ["sectionView", false, 18],
  ["orient", true, 17], ["cube", true, 17], ["glasses", true, 17], ["ball", false, 17],
  ["scene", true, 18], ["viewSet", true, 17],
];

const navPaths = ["M6 1 2 4l4 3zM1 1v6", "M5 1 2 4l3 3z", "M2 1l3 3-3 3z", "M1 1l4 3-4 3zM6 1v6"];

export default function App() {
  return (
    <Shell>
      <GlobalStyle />
      <TitleBar>
        <Brand><CubeLogo size={18} /><span><b>SOLID</b>WORKS</span></Brand>
        <BrandEdge />
        <MenuBar>
          {["File", "Edit", "View", "Insert", "Tools", "Window", "Help"].map((m) => (
            <MenuItem key={m} $on={m === "File"}>{m}</MenuItem>
          ))}
          <Tool $w={20} aria-label="Pin menu"><Icon name="pin" size={11} /></Tool>
        </MenuBar>
        <Rule />
        <ToolGroup>
          {fileTools.map(([icon, label]) => (
            <React.Fragment key={icon}>
              <Tool $w={14} aria-label={label}><Icon name={icon} size={14} /></Tool>
              <Tool $w={13} aria-label={`${label} options`}><Caret /></Tool>
            </React.Fragment>
          ))}
          <PressedPair>
            <Tool $w={16} aria-label="Select"><Icon name="cursor" /></Tool>
            <Tool $w={9} aria-label="Select options"><Caret /></Tool>
          </PressedPair>
          <Tool $w={17} aria-label="Rebuild"><Icon name="traffic" /></Tool>
          <Tool $w={17} aria-label="File properties"><Icon name="props" /></Tool>
          <Tool $w={18} aria-label="Options"><Icon name="list" /></Tool>
          <Tool $w={8} aria-label="More options"><Caret /></Tool>
        </ToolGroup>
        <DocTitle>Complete Housing *</DocTitle>
        <SearchBox>
          <Icon name="searchHelp" size={13} />
          <input aria-label="Search" placeholder="Search SolidWorks Help" />
          <Icon name="search" size={13} />
          <Caret color="#111" />
        </SearchBox>
        <ToolGroup>
          <Tool $w={20} aria-label="Help"><Icon name="help" /></Tool>
          <Tool $w={8} aria-label="Help options"><Caret /></Tool>
          <Tool $w={18} aria-label="Minimize"><Icon name="min" size={11} /></Tool>
          <Tool $w={17} aria-label="Restore"><Icon name="restore" /></Tool>
          <Tool $w={18} aria-label="Close"><Icon name="close" size={11} /></Tool>
        </ToolGroup>
      </TitleBar>

      <Ribbon>
        <Command $w={34} $tight>
          <Icon name="study" size={13} />
          {"Design\nStudy"}
          <svg width="5" height="3" viewBox="0 0 5 3"><path d="M0 0h5L2.500 3z" fill="#33354a" /></svg>
        </Command>
        {ribbonGroups.map((group, i) => (
          <React.Fragment key={i}>
            <Divider />
            {group.map(([icon, label, w]) => (
              <Command key={icon} $w={w}><Icon name={icon} />{label}</Command>
            ))}
          </React.Fragment>
        ))}
        <Watermark width="56" height="52" viewBox="0 0 56 52" aria-hidden="true">
          <g fill="none" stroke="#cfd7e8" strokeLinecap="round" strokeLinejoin="round">
            <path d="M20 4c10-4 20 0 14 6-3 4-8 6-14 10" strokeWidth="3" />
            <path d="M8 27c16-3 22 1 16 9-5 6-12 9-20 13L16 29" strokeWidth="3" />
            <path d="M53 20c-9-2-16 2-14 6 2 5 12 7 8 14-2 4-10 5-17 3" strokeWidth="4" />
          </g>
        </Watermark>
      </Ribbon>

      <Main>
        <Side>
          <TabStrip>
            <CommandTab $w={53}>Assembly</CommandTab>
            <CommandTab $w={42}>Layout</CommandTab>
            <CommandTab $w={42}>Sketch</CommandTab>
            <CommandTab $w={47} $on>Evaluate</CommandTab>
            <CommandTab $w={74}>Office Products</CommandTab>
          </TabStrip>
          <PaneTabs>
            <PaneTab $on aria-label="Feature tree"><Icon name="assy" size={13} /></PaneTab>
            <PaneTab aria-label="Properties"><Icon name="props" size={13} /></PaneTab>
            <PaneTab aria-label="Configurations"><Icon name="config" size={13} /></PaneTab>
            <PaneTab aria-label="Display"><Icon name="ball" size={13} /></PaneTab>
            <More aria-label="More tabs">»</More>
          </PaneTabs>
          <FilterBox><Icon name="filter" size={10} /><Caret /></FilterBox>
          <TreeFrame>
            <Tree>
              {rows.map(([level, sign, icon, label], i) => (
                <TreeRow key={i}>
                  {level === 2 && <Guide />}
                  {level > 0 && <Guide $branch>{sign && <Expander sign={sign} />}</Guide>}
                  <Glyph><Icon name={icon} size={13} /></Glyph>
                  {label}
                </TreeRow>
              ))}
            </Tree>
            <ScrollV>
              <Caret up />
              <ThumbV><svg width="6" height="7" viewBox="0 0 6 7"><path d="M0 .5h6M0 3.500h6M0 6.500h6" stroke="#666" /></svg></ThumbV>
              <Caret />
            </ScrollV>
            <ScrollH>
              <svg width="3" height="5" viewBox="0 0 3 5"><path d="M3 0v5L0 2.500z" fill="#333" /></svg>
              <ThumbH><svg width="7" height="5" viewBox="0 0 7 5"><path d="M.5 0v5M3.500 0v5M6.500 0v5" stroke="#666" /></svg></ThumbH>
              <svg width="3" height="5" viewBox="0 0 3 5"><path d="M0 0v5l3-2.500z" fill="#333" /></svg>
            </ScrollH>
          </TreeFrame>
          <Splitter aria-label="Resize panel"><i /><i /><i /></Splitter>
        </Side>

        <Viewport>
          <Housing />
          <Hud>
            {hudTools.map(([icon, menu, w]) => (
              <React.Fragment key={icon}>
                <Tool $w={w} aria-label={icon}><Icon name={icon} size={13} /></Tool>
                {menu && <Tool $w={7} aria-label={`${icon} menu`}><Caret color="#6c6c6c" /></Tool>}
              </React.Fragment>
            ))}
            <HudEnd>
              {["paneL", "paneR", "min", "restore", "close"].map((n) => (
                <Tool key={n} $w={17} aria-label={n}><Icon name={n} size={11} /></Tool>
              ))}
            </HudEnd>
          </Hud>
          <TaskPane>
            {["home", "library", "folderOpen", "palette", "ball", "props"].map((n, i) => (
              <TaskTab key={n} $on={i === 0} aria-label={n}><Icon name={n} size={13} /></TaskTab>
            ))}
          </TaskPane>
        </Viewport>
      </Main>

      <MotionBar>
        {navPaths.map((d) => (
          <NavButton key={d} aria-label="Scroll tabs">
            <svg width="7" height="8" viewBox="0 0 7 8"><path d={d} fill="#85889c" stroke="#85889c" /></svg>
          </NavButton>
        ))}
        <SheetTab $w={42} $on>Model</SheetTab>
        <SheetTab $w={77}>Motion Study 1</SheetTab>
      </MotionBar>

      <StatusBar>
        <span>SolidWorks Office 2012 x64 Edition</span>
        <StatusGroup>
          <StatusCell $w={68} $ruled>Under Defined</StatusCell>
          <StatusCell $w={84} $ruled>Editing Assembly</StatusCell>
          <StatusCell $w={10} $ruled />
          <StatusCell $w={10} $ruled />
          <StatusCell $w={34}>IPS</StatusCell>
          <StatusCell $w={12}><Caret up color="#555" /></StatusCell>
          <StatusCell $w={26}><Icon name="helpBox" size={11} /></StatusCell>
          <StatusCell $w={30} />
          <Icon name="tag" />
        </StatusGroup>
      </StatusBar>

      <Taskbar>
        <Tool $w={28} aria-label="Start"><Orb /></Tool>
        <AppGroup>
          <AppButton aria-label="Explorer"><ExplorerIcon /></AppButton>
          <AppButton aria-label="Firefox"><FoxIcon /></AppButton>
          <AppButton $on aria-label="SolidWorks"><CubeLogo size={25} /></AppButton>
        </AppGroup>
        <Tray>
          <Caret up color="#fff" />
          <Icon name="plug" />
          <Icon name="signal" size={11} />
          <Icon name="speaker" size={11} />
          <Clock>6:41 PM<br />10/2/2012</Clock>
          <ShowDesktop aria-label="Show desktop" />
        </Tray>
      </Taskbar>
    </Shell>
  );
}
